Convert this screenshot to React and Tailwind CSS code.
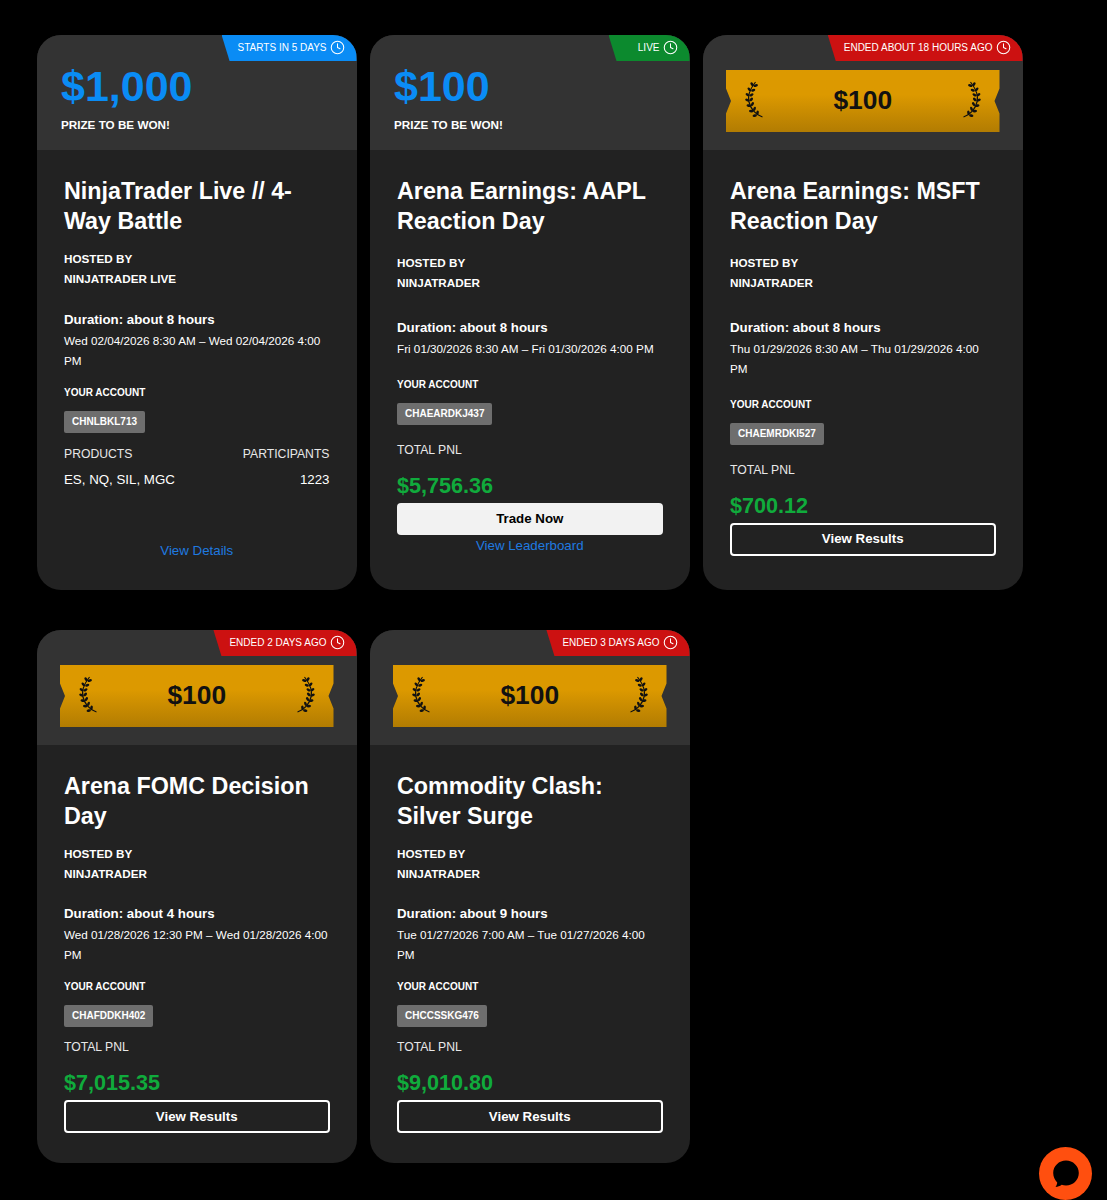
import React from "react";
import { Clock } from "lucide-react";

const cards = [
  {
    prize: "$1,000",
    tag: "STARTS IN 5 DAYS",
    tagColor: "bg-[#0a8cf5]",
    title: "NinjaTrader Live // 4-Way Battle",
    host: "NINJATRADER LIVE",
    duration: "Duration: about 8 hours",
    dates: "Wed 02/04/2026 8:30 AM – Wed 02/04/2026 4:00 PM",
    account: "CHNLBKL713",
    upcoming: true,
  },
  {
    prize: "$100",
    tag: "LIVE",
    tagColor: "bg-[#0c8a2e] min-w-[81px] justify-end",
    title: "Arena Earnings: AAPL Reaction Day",
    host: "NINJATRADER",
    duration: "Duration: about 8 hours",
    dates: "Fri 01/30/2026 8:30 AM – Fri 01/30/2026 4:00 PM",
    account: "CHAEARDKJ437",
    pnl: "$5,756.36",
    live: true,
  },
  {
    prize: "$100",
    ended: true,
    tag: "ENDED ABOUT 18 HOURS AGO",
    tagColor: "bg-[#cc1111]",
    title: "Arena Earnings: MSFT Reaction Day",
    host: "NINJATRADER",
    duration: "Duration: about 8 hours",
    dates: "Thu 01/29/2026 8:30 AM – Thu 01/29/2026 4:00 PM",
    account: "CHAEMRDKI527",
    pnl: "$700.12",
  },
  {
    prize: "$100",
    ended: true,
    tag: "ENDED 2 DAYS AGO",
    tagColor: "bg-[#cc1111]",
    title: "Arena FOMC Decision Day",
    host: "NINJATRADER",
    duration: "Duration: about 4 hours",
    dates: "Wed 01/28/2026 12:30 PM – Wed 01/28/2026 4:00 PM",
    account: "CHAFDDKH402",
    pnl: "$7,015.35",
  },
  {
    prize: "$100",
    ended: true,
    tag: "ENDED 3 DAYS AGO",
    tagColor: "bg-[#cc1111]",
    title: "Commodity Clash: Silver Surge",
    host: "NINJATRADER",
    duration: "Duration: about 9 hours",
    dates: "Tue 01/27/2026 7:00 AM – Tue 01/27/2026 4:00 PM",
    account: "CHCCSSKG476",
    pnl: "$9,010.80",
  },
];

// leaf pairs along the stem: x, y, stem angle
const leaves = [
  [8.5, 5, 20],
  [6, 10, 12],
  [4.5, 15, 2],
  [4.5, 20, -10],
  [6, 25, -22],
  [8.5, 30, -34],
  [12, 34, -46],
];

const Laurel = ({ flip }) => (
  <svg
    width="18"
    height="40"
    viewBox="0 0 18 40"
    className={flip ? "-scale-x-100" : ""}
    fill="#111"
  >
    <path d="M10.5 1C5 8 2.5 15 4 21c1.3 6 6 12.500 13.500 15" fill="none" stroke="#111" strokeWidth="1.2" />
    {leaves.map(([x, y, r], i) => (
      <g key={i} transform={`translate(${x} ${y}) rotate(${r})`}>
        <ellipse cx="-2" cy="-1.2" rx="2.2" ry="1.3" transform="rotate(35 -2 -1.2)" />
        <ellipse cx="2" cy="-1.2" rx="2.2" ry="1.3" transform="rotate(-35 2 -1.2)" />
      </g>
    ))}
  </svg>
);

const Ribbon = ({ prize }) => (
  <div className="flex h-[62px] items-center justify-between bg-linear-to-b from-[#dc9900] from-40% to-[#b27c02] px-[19px] [clip-path:polygon(0_0,100%_0,100%_30%,calc(100%-5px)_50%,100%_70%,100%_100%,0_100%,0_70%,5px_50%,0_30%)]">
    <Laurel />
    <span className="text-[26.4px] font-bold text-[#111]">{prize}</span>
    <Laurel flip />
  </div>
);

const Card = ({ card }) => (
  <div className={`relative flex flex-col overflow-hidden rounded-[24px] bg-[#222222] text-white ${card.upcoming ? "min-h-[555px]" : ""}`}>
    <div
      className={`absolute right-0 top-0 flex h-[26px] items-center gap-[3px] pb-px pl-[16px] pr-[12px] text-[10px] [clip-path:polygon(0_0,100%_0,100%_100%,8px_100%)] ${card.tagColor}`}
    >
      {card.tag}
      <Clock size={15} strokeWidth={1.7} />
    </div>

    {card.ended ? (
      <div className="h-[115px] bg-[#333333] px-[23px] pt-[35px]">
        <Ribbon prize={card.prize} />
      </div>
    ) : (
      <div className="h-[115px] bg-[#333333] pl-6 pt-[27px]">
        <div className="text-[43px] font-bold leading-[48px] text-[#0a8cf5]">{card.prize}</div>
        <div className="mt-[5px] text-[11.7px] font-bold leading-5">PRIZE TO BE WON!</div>
      </div>
    )}

    <div className="flex flex-1 flex-col px-[27px] pb-[29px] pt-[26px]">
      <h2 className="text-[23.3px] font-bold leading-[30px]">{card.title}</h2>
      <div className="flex flex-1 flex-col justify-evenly">
        <div className="mt-[13px] text-[11.7px] font-bold leading-5">
          <div>HOSTED BY</div>
          <div>{card.host}</div>
        </div>
        <div className="mt-5">
          <div className="text-[13.3px] font-bold leading-5">{card.duration}</div>
          <div className="mt-px text-[11.7px] leading-5">{card.dates}</div>
        </div>
        <div className="mt-3">
          <div className="text-[10px] font-bold leading-5">YOUR ACCOUNT</div>
          <div className="mt-2 inline-block h-[22px] rounded-[2px] bg-[#6e6e6e] px-2 text-[10px] font-bold leading-[22px]">
            {card.account}
          </div>
        </div>
        {card.upcoming ? (
          <div className="mt-[10px]">
            <div className="flex justify-between text-[12.2px] leading-5 text-[#e8e8e8]">
              <span>PRODUCTS</span>
              <span>PARTICIPANTS</span>
            </div>
            <div className="mt-[6px] flex justify-between text-[13.3px] leading-5">
              <span>ES, NQ, SIL, MGC</span>
              <span>1223</span>
            </div>
            <a className="mt-[51px] block text-center text-[13.3px] leading-5 text-[#1f7ae0]">View Details</a>
          </div>
        ) : (
          <div className="mb-px mt-[10px]">
            <div className="text-[12.2px] leading-5 text-[#e8e8e8]">TOTAL PNL</div>
            <div className="mt-[10px] text-[21.6px] font-bold leading-8 text-[#10ab3c]">{card.pnl}</div>
            {card.live ? (
              <>
                <button className="mt-px block h-8 w-full rounded-[4px] bg-[#f2f2f2] text-[13.3px] font-bold text-black">
                  Trade Now
                </button>
                <a className="mt-px block text-center text-[13.3px] leading-5 text-[#1f7ae0]">View Leaderboard</a>
              </>
            ) : (
              <button className="mt-px block h-[33px] w-full rounded-[4px] border-2 border-white text-[13.3px] font-bold text-white">
                View Results
              </button>
            )}
          </div>
        )}
      </div>
    </div>
  </div>
);

const App = () => {
  return (
    <div className="relative min-h-screen bg-black font-['Liberation_Sans',Arial,sans-serif]">
      <div className="grid grid-cols-[repeat(3,319.5px)] gap-x-[13.5px] gap-y-10 pb-[38px] pl-[37px] pt-[35px]">
        {cards.map(card => (
          <Card key={card.account} card={card} />
        ))}
      </div>
      <button className="absolute left-[1039px] top-[1147px] flex h-[53px] w-[53px] items-center justify-center rounded-full bg-[#ff4f0f]">
        <svg width="28" height="28" viewBox="0 0 28 28" fill="#000">
          <path d="M14 .5C21 .5 26.800 6 26.800 13S21 25.500 14 25.500c-1.500 0-3-.3-4.300-.8-1.800 1.400-4 2.100-6.200 2.200 1-1.300 1.600-2.900 1.700-4.500C2.900 20.100 1.200 16.800 1.200 13 1.200 6 7 .5 14 .5Z" />
        </svg>
      </button>
    </div>
  );
};

export default App;
